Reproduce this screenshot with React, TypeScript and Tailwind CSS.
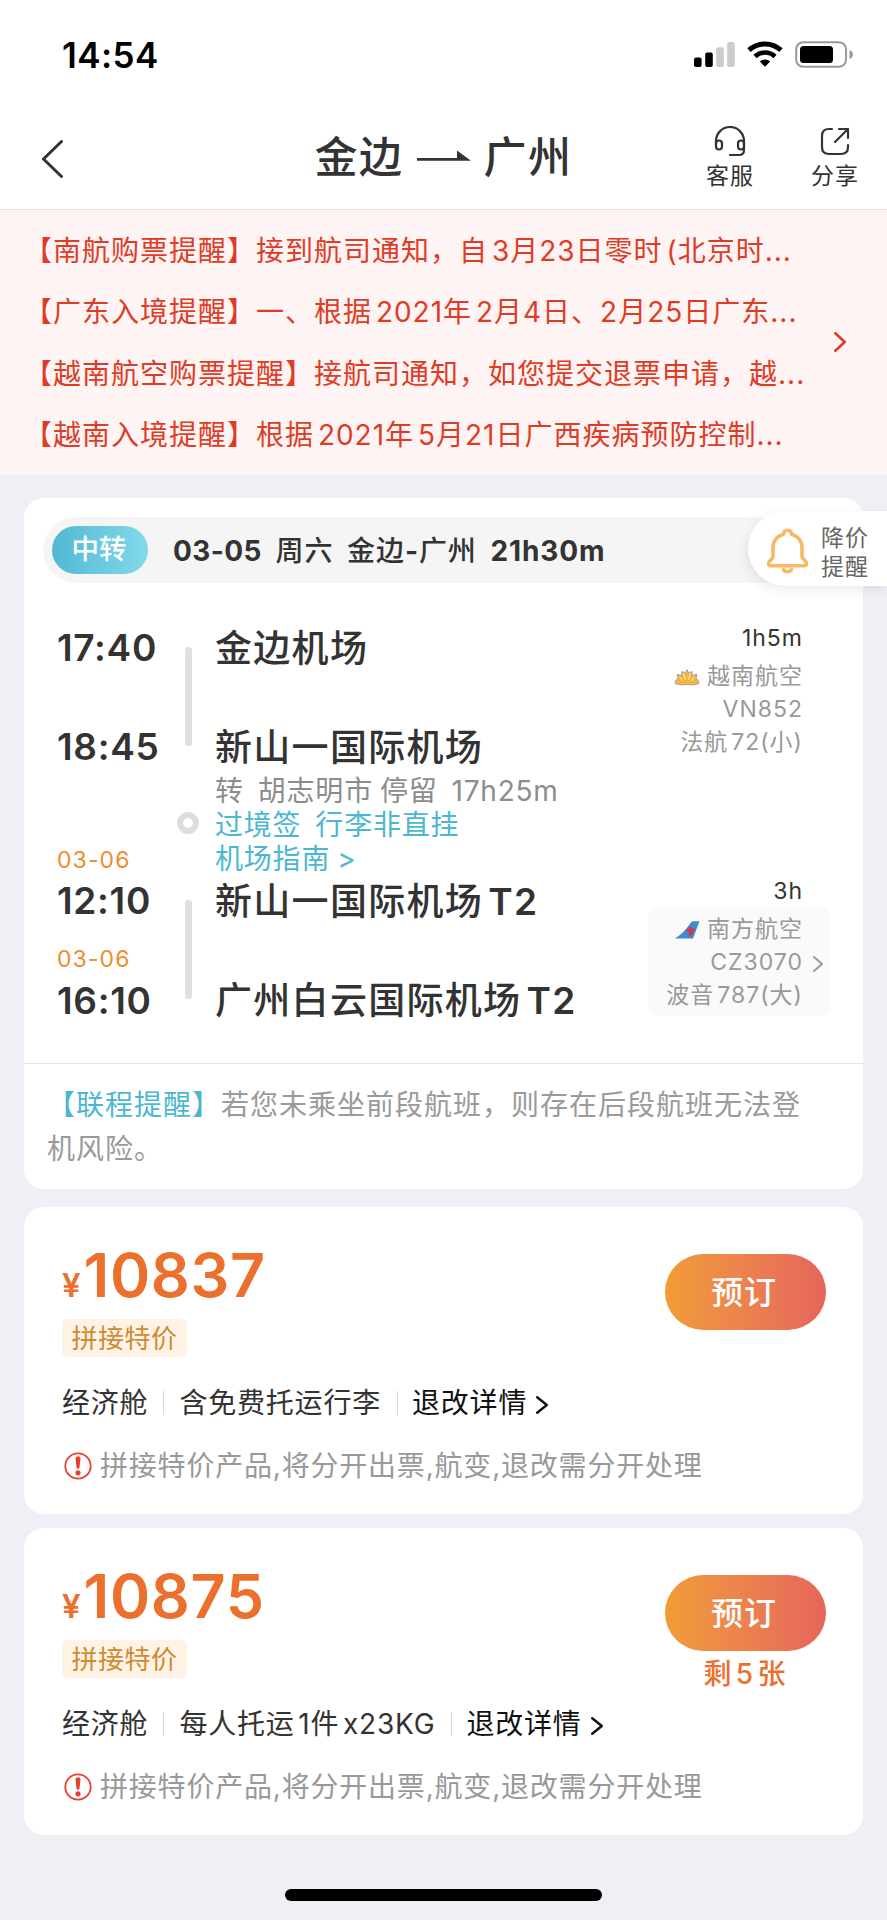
import React from 'react';

const notices = [
  '【南航购票提醒】接到航司通知，自 3月23日零时 (北京时...',
  '【广东入境提醒】一、根据 2021年 2月4日、2月25日广东...',
  '【越南航空购票提醒】接航司通知，如您提交退票申请，越...',
  '【越南入境提醒】根据 2021年 5月21日广西疾病预防控制...',
];

const Chevron: React.FC<{ className: string; width: number; height: number; stroke: number; left?: boolean }> = ({ className, width, height, stroke, left }) => {
  const p = stroke / 2;
  const points = left
    ? `${width - p},${p} ${p},${height / 2} ${width - p},${height - p}`
    : `${p},${p} ${width - p},${height / 2} ${p},${height - p}`;
  return (
    <svg className={className} width={width} height={height} viewBox={`0 0 ${width} ${height}`} fill="none" stroke="currentColor" strokeWidth={stroke} strokeLinecap="round" strokeLinejoin="round">
      <polyline points={points} />
    </svg>
  );
};

const StatusBar: React.FC = () => (
  <div className="flex h-[110px] items-start justify-between pl-[62px] pr-[34px] pt-[34px]">
    <span className="text-[35px] leading-[42px] font-semibold tracking-[0.400px] text-black">14:54</span>
    <div className="flex items-start pt-[7px]">
      <svg width="42" height="27" viewBox="0 0 42 27">
        <rect x="0" y="16.5" width="7.6" height="9.5" rx="2" fill="#000" />
        <rect x="11.2" y="11.5" width="7.6" height="14.5" rx="2" fill="#000" />
        <rect x="22.2" y="6.2" width="7.6" height="19.8" rx="2" fill="#ccc" />
        <rect x="33.2" y="1" width="7.6" height="25" rx="2" fill="#ccc" />
      </svg>
      <svg className="ml-[11px]" width="36" height="27" viewBox="0 0 36 27" fill="none" stroke="#000">
        <path d="M2 9.2a23.5 23.5 0 0 1 32 0" strokeWidth="5" />
        <path d="M8 15.5a14.5 14.5 0 0 1 20 0" strokeWidth="4.6" />
        <path d="M18 25.8l-5.2-5.2a7.5 7.5 0 0 1 10.4 0z" fill="#000" stroke="none" />
      </svg>
      <svg className="ml-[12px]" width="58" height="27" viewBox="0 0 58 27">
        <rect x="1.2" y="1.2" width="49.8" height="24.6" rx="7" fill="none" stroke="#999" strokeWidth="2" />
        <rect x="5" y="5" width="33" height="17" rx="3.5" fill="#000" />
        <path d="M54.5 9c4.5 1.5 4.5 7.500 0 9z" fill="#999" />
      </svg>
    </div>
  </div>
);

const Header: React.FC = () => (
  <div className="relative flex h-[100px] items-start justify-center border-b border-[#e6e3e5] pt-[21px] text-[#333]">
    <Chevron className="absolute left-[42px] top-[30px]" width={21} height={38} stroke={3} left />
    <div className="flex h-[52px] items-center">
      <span className="text-[43px] leading-[52px] font-medium tracking-[1.5px]">金边</span>
      <svg className="ml-[13px] mr-[13px]" width="54" height="14" viewBox="0 0 54 14" fill="#333">
        <path d="M0 8h40V.5L54 10.700H0z" />
      </svg>
      <span className="text-[43px] leading-[52px] font-medium tracking-[1.5px]">广州</span>
    </div>
    <div className="absolute right-[28px] top-[16px] flex gap-[57px] text-[23px] leading-[32px] tracking-[1px]">
      <div className="flex w-[48px] flex-col items-center">
        <svg width="32" height="32" viewBox="0 0 32 32" fill="none" stroke="#333" strokeWidth="2.200" strokeLinecap="round">
          <path d="M2 19v-4a14 14 0 0 1 28 0v9q0 5-5 5H16" />
          <rect x="2" y="14.500" width="6" height="9" rx="3" />
          <rect x="24" y="14.500" width="6" height="9" rx="3" />
        </svg>
        <span className="mt-[2px]">客服</span>
      </div>
      <div className="flex w-[48px] flex-col items-center">
        <svg width="32" height="32" viewBox="0 0 32 32" fill="none" stroke="#333" strokeWidth="2.200" strokeLinecap="round" strokeLinejoin="round">
          <path d="M13 3H10q-7 0-7 7v11q0 7 7 7h12q7 0 7-7v-2" />
          <path d="M20 3h9v9M29 3L16 16" />
        </svg>
        <span className="mt-[2px]">分享</span>
      </div>
    </div>
  </div>
);

const Notice: React.FC = () => (
  <div className="flex h-[265px] items-start justify-between bg-[#fef4f3] pl-[24px] pr-[41px] pt-[11px] text-[#de3c27]">
    <div className="text-[28px] leading-[61.400px] tracking-[1px] whitespace-nowrap [word-spacing:-5px]">
      {notices.map((text) => (
        <p key={text}>{text}</p>
      ))}
    </div>
    <Chevron className="mt-[111px]" width={12} height={20} stroke={2.600} />
  </div>
);

const PriceAlert: React.FC = () => (
  <div className="absolute right-0 top-[511px] flex h-[75px] w-[139px] items-center rounded-l-full bg-white pl-[18px] shadow-[-2px_4px_12px_rgba(0,0,0,0.08)]">
    <svg className="mt-[4px]" width="43" height="46" viewBox="0 0 43 46" fill="none" stroke="#f6b965" strokeWidth="3.600" strokeLinecap="round" strokeLinejoin="round">
      <path d="M17.500 6.200a4 4 0 0 1 8 0c6.500 1.800 10.500 7 10.500 13.500v9c0 2 4.500 4.300 4.500 6.500 0 1.700-1 2.600-2.500 2.600H5c-1.500 0-2.500-.9-2.500-2.600 0-2.200 4.500-4.500 4.500-6.500v-9c0-6.500 4-11.700 10.500-13.500z" />
      <path d="M17.500 41.500c1.500 3 6.500 3 8 0" />
    </svg>
    <div className="ml-[12px] pt-[8px] text-[23px] leading-[29px] tracking-[1px] text-[#666]">
      <p>降价</p>
      <p>提醒</p>
    </div>
  </div>
);

const LotusLogo: React.FC = () => (
  <svg width="26" height="18" viewBox="0 0 26 18" fill="#f3b53a" stroke="#9d97b8" strokeWidth=".8">
    <path d="M1 15.500Q1 11 4 11L3 6.500Q6 6 7.500 8L8 3.500Q10 3.500 11 5.500L13 1.500L15 5.500Q16 3.500 18 3.500L18.500 8Q20 6 23 6.500L22 11Q25 11 25 15.500Q19 18 13 16.500Q7 18 1 15.500z" />
    <path d="M11.500 12L9.500 5.500M14.500 12L16.500 5.500M9 13L5.500 9M17 13L20.500 9" stroke="#fff" strokeWidth=".8" />
  </svg>
);

const TailLogo: React.FC = () => (
  <svg width="25" height="18" viewBox="0 0 25 18">
    <path d="M0 17.500Q9 12 15.500 2Q16.500.3 18.500.3H24.500L18 17.500z" fill="#3d8bd0" />
    <path d="M10.500 8.500l2.500-1 1 1 .5-2.500h2l.5 2 2-1 .5 2-1.500 1.500-.5 3-2 1.500-2-1.500.5-2.500z" fill="#e0304a" />
  </svg>
);

interface FlightProps {
  duration: string;
  airline: string;
  code: string;
  plane: string;
  logo: React.ReactNode;
  link?: boolean;
}

const Flight: React.FC<FlightProps> = ({ duration, airline, code, plane, logo, link }) => (
  <div className="w-[182px] text-[23px] tracking-[1px] text-[#999] [word-spacing:-4.5px]">
    <p className="h-[28px] pr-[27px] text-right leading-[28px] text-[#333]">{duration}</p>
    <div className={link ? 'relative mt-[2px] h-[109px] rounded-[8px] bg-[#fafafa] pr-[27px] pt-[6px] text-right leading-[33px]' : 'mt-[2px] h-[109px] pr-[27px] pt-[6px] text-right leading-[33px]'}>
      <div className="flex items-center justify-end gap-[7px]">
        {logo}
        <span>{airline}</span>
      </div>
      <p>{code}</p>
      <p>{plane}</p>
      {link && <Chevron className="absolute right-[7px] top-[49px]" width={10} height={16} stroke={2} />}
    </div>
  </div>
);

const Itinerary: React.FC = () => (
  <div className="flex h-[480px] pl-[33px] text-[#333]">
    <div className="w-[120px] pt-[43px] text-[37px] leading-[44px] font-semibold tracking-[0.700px]">
      <p>17:40</p>
      <p className="mt-[55px]">18:45</p>
      <p className="mt-[76px] text-[23px] leading-[30px] font-normal tracking-[1.100px] text-[#f08c2e]">03-06</p>
      <p className="mt-[4px]">12:10</p>
      <p className="mt-[21px] text-[23px] leading-[30px] font-normal tracking-[1.100px] text-[#f08c2e]">03-06</p>
      <p className="mt-[5px]">16:10</p>
    </div>
    <div className="flex w-[22px] flex-col items-center pt-[64px]">
      <div className="h-[99px] w-[7px] rounded-[3px] bg-[#e0e0e0]"></div>
      <div className="mt-[66px] h-[22px] w-[22px] rounded-full border-[6.500px] border-[#ddd]"></div>
      <div className="mt-[66px] h-[99px] w-[7px] rounded-[3px] bg-[#e0e0e0]"></div>
    </div>
    <div className="flex-1 pl-[16px] pt-[44px] text-[37px] leading-[44px] font-medium tracking-[1.300px] whitespace-nowrap [word-spacing:-6px]">
      <p>金边机场</p>
      <p className="mt-[55px]">新山一国际机场</p>
      <div className="mt-[4px] text-[28px] leading-[34px] font-normal tracking-[0.800px] text-[#4db7d1] [word-spacing:-1.7px]">
        <p className="whitespace-pre text-[#8c8c8c]">转  胡志明市 停留  17h25m</p>
        <p className="whitespace-pre">过境签  行李非直挂</p>
        <p>机场指南 &gt;</p>
      </div>
      <p className="mt-[4px]">新山一国际机场 <span className="font-semibold">T2</span></p>
      <p className="mt-[55px]">广州白云国际机场 <span className="font-semibold">T2</span></p>
    </div>
    <div className="mr-[33px] flex flex-col gap-[114px] pt-[41px]">
      <Flight duration="1h5m" airline="越南航空" code="VN852" plane="法航 72(小)" logo={<LotusLogo />} />
      <Flight duration="3h" airline="南方航空" code="CZ3070" plane="波音 787(大)" logo={<TailLogo />} link />
    </div>
  </div>
);

const TripCard: React.FC = () => (
  <div className="h-[691px] rounded-[20px] bg-white pt-[19px]">
    <div className="ml-[19px] mr-[19px] flex h-[66px] items-center rounded-full bg-[#f5f5f5] pl-[9px] text-[28px] text-[#333]">
      <div className="flex h-[48px] w-[96px] items-center justify-center rounded-full bg-gradient-to-r from-[#52b8d3] to-[#80dae9] pr-[2px] text-[27.500px] font-medium text-white">中转</div>
      <p className="ml-[25px] pt-px whitespace-pre font-medium tracking-[0.900px] [word-spacing:-1.5px]"><span className="font-bold tracking-[0.400px]">03-05</span>  周六  金边<span className="font-bold">-</span>广州  <span className="font-bold">21h30m</span></p>
    </div>
    <Itinerary />
    <p className="border-t border-[#e5e5e5] pl-[23px] pr-[40px] pt-[19px] text-[28px] leading-[44px] tracking-[1px] text-[#9a9a9a]">
      <span className="text-[#4db7d1]">【联程提醒】</span>若您未乘坐前段航班，则存在后段航班无法登机风险。
    </p>
  </div>
);

const FareCard: React.FC<{ price: string; baggage: string; left?: string }> = ({ price, baggage, left }) => (
  <div className="h-[307px] rounded-[20px] bg-white pl-[38px] pr-[37px] whitespace-nowrap">
    <div className="flex h-[214px] justify-between">
      <div className="pt-[37px]">
        <div className="flex h-[62px] items-baseline leading-[62px] font-semibold text-[#ec702d]">
          <span className="mr-[3px] text-[33px]">¥</span>
          <span className="text-[61px] tracking-[0.600px]">{price}</span>
        </div>
        <div className="mt-[13px] flex h-[38px] w-[125px] items-center justify-center rounded-[5px] bg-[#fef3e5] text-[26px] tracking-[0.500px] text-[#cf8a33]">拼接特价</div>
        <div className="mt-[28px] flex h-[36px] items-center text-[28px] leading-[36px] tracking-[0.800px] text-[#333] [word-spacing:-5px]">
          <span>经济舱</span>
          <span className="ml-[15px] mr-[15px] h-[24px] w-px bg-[#d8d8d8]"></span>
          <span>{baggage}</span>
          <span className="ml-[16px] mr-[14px] h-[24px] w-px bg-[#d8d8d8]"></span>
          <span className="text-[#111]">退改详情</span>
          <Chevron className="ml-[9px] mt-[3px] text-[#111]" width={12} height={18} stroke={2.400} />
        </div>
      </div>
      <div className="flex flex-col items-center pt-[47px]">
        <button className="h-[76px] w-[161px] rounded-full bg-gradient-to-r from-[#f19c37] to-[#e5655b] pr-[3px] pt-[2px] text-[32px] font-medium tracking-[1px] text-white">预订</button>
        {left && <p className="mt-[6px] pr-[2px] text-[28px] leading-[34px] font-medium text-[#ec702d] [word-spacing:-3px]">{left}</p>}
      </div>
    </div>
    <div className="mt-[27px] flex h-[36px] items-center text-[28px] leading-[36px] tracking-[0.800px] text-[#999]">
      <svg className="ml-[2px] mr-[8px]" width="28" height="28" viewBox="0 0 28 28">
        <circle cx="14" cy="14" r="12.700" fill="none" stroke="#e8402f" strokeWidth="1.800" />
        <path d="M11.500 6.800a2.500 2.500 0 0 1 5 0l-1 8.500a1.500 1.500 0 0 1-3 0z" fill="#e8402f" />
        <circle cx="14" cy="20.800" r="2.600" fill="#e8402f" />
      </svg>
      <span>拼接特价产品,将分开出票,航变,退改需分开处理</span>
    </div>
  </div>
);

export default function App() {
  return (
    <div lang="zh-CN" className="relative h-[1920px] w-[887px] overflow-hidden bg-[#eff0f5] font-['Inter','Noto_Sans_CJK_SC',sans-serif]">
      <div className="bg-white">
        <StatusBar />
        <Header />
      </div>
      <Notice />
      <div className="px-[24px] pt-[23px]">
        <TripCard />
        <div className="mt-[18px] flex flex-col gap-[14px]">
          <FareCard price="10837" baggage="含免费托运行李" />
          <FareCard price="10875" baggage="每人托运 1件 x23KG" left="剩 5 张" />
        </div>
      </div>
      <PriceAlert />
      <div className="mx-auto mt-[54px] h-[12px] w-[317px] rounded-full bg-black"></div>
    </div>
  );
}
